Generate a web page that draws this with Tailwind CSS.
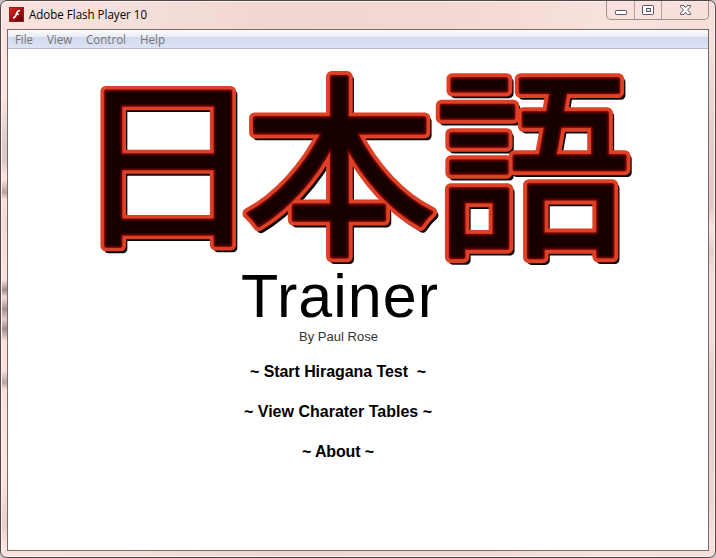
<!DOCTYPE html>
<html lang="en">
<head>
<meta charset="utf-8">
<title>Adobe Flash Player 10</title>
<script src="https://cdn.jsdelivr.net/npm/@tailwindcss/browser@4"></script>
</head>
<body class="h-[558px] w-[716px] overflow-hidden bg-[#c9c4c4]">
<div class="relative flex h-[558px] w-[716px] flex-col rounded-[7px] border border-[#514748] bg-[#fbe2de] bg-[linear-gradient(90deg,#fbe3df_0%,#f5dfda_18%,#f0d6d1_38%,#f3d8d3_65%,#f8e2dd_85%,#f6dfda_100%)] px-[6px] pb-[6px] shadow-[inset_0_0_0_1px_#fff1ee]">
  <div class="absolute left-px top-[57px] h-[488px] w-[5px] bg-[linear-gradient(180deg,#ffe4e0_0%,#ffe4e0_8%,#dcc8c6_18%,#ddc8c5_21%,#fde0dc_24%,#fde0dc_25%,#b99f9d_27.5%,#fde0dc_29%,#f3d8d4_33%,#fde0dc_44%,#fde0dc_45.5%,#a28c8c_47.5%,#f5d8d4_49%,#a69191_51.5%,#e8ccc8_53.5%,#a28c8c_55.5%,#fde0dc_58%,#fde0dc_64%,#b7a3a2_66.5%,#fde0dc_68%,#ffe4e0_85%,#e8cfcb_96%,#ffe4e0_100%)]"></div>
  <div class="absolute right-px top-[57px] h-[488px] w-[5px] bg-[linear-gradient(180deg,#f2dcd7_0%,#e8cfca_15%,#e5c8c3_30%,#fbe2dc_35%,#e8cec9_40%,#f6ddd7_44%,#f6ddd7_58%,#e8cfca_64%,#ecd3ce_90%,#fbe2de_100%)]"></div>
  <header class="flex h-[28px] shrink-0 items-start justify-between">
    <div class="flex items-center pl-[2px] pt-[5px]">
      <svg class="h-[15px] w-[15px]" viewBox="0 0 15 15">
        <defs><linearGradient id="flash" x1="0" y1="0" x2="1" y2="1"><stop offset="0" stop-color="#e52b20"/><stop offset=".5" stop-color="#a50d0b"/><stop offset="1" stop-color="#5c0304"/></linearGradient></defs>
        <rect x=".5" y=".5" width="14" height="14" fill="url(#flash)" stroke="#8a2320" stroke-width="1"/>
        <path d="M11 3.5C8.5 3.5 8 5.200 7.300 7.200C6.700 9 6 10.800 4 11" fill="none" stroke="#fff" stroke-width="1.700"/>
        <path d="M7.200 7.300h2.600" stroke="#fff" stroke-width="1.500"/>
      </svg>
      <h1 class="ml-[5px] whitespace-pre font-['Open_Sans','Noto_Sans',sans-serif] text-[12px] leading-[17px] text-black"><svg class="block h-[17px] w-[122px] overflow-visible"><text x="0" y="13" textLength="118" lengthAdjust="spacingAndGlyphs">Adobe Flash Player 10</text></svg></h1>
    </div>
    <div class="flex h-[19px] w-[103px] rounded-b-[5px] border border-t-0 border-[#a08f8e] bg-[#f8e1dc]/60">
      <div class="w-[28px] border-r border-[#b5a19f]"><svg class="h-[18px] w-[27px]" viewBox="0 0 27 18"><rect x="8.500" y="9.500" width="11" height="4" rx=".7" fill="#fff" stroke="#5b5766"/></svg></div>
      <div class="w-[27px] border-r border-[#b5a19f]"><svg class="h-[18px] w-[26px]" viewBox="0 0 26 18"><rect x="7.500" y="4.500" width="11" height="9" rx=".7" fill="#fff" stroke="#5b5766"/><rect x="11.500" y="7.500" width="4" height="3" fill="#f8e1dc" stroke="#5b5766"/></svg></div>
      <div class="flex-1"><svg class="h-[18px] w-[46px]" viewBox="0 0 46 18"><path d="M18.500 4.500h3.300l1.700 2.100 1.700-2.100h3.300v1.300L25.600 9l2.900 3.200v1.300h-3.300l-1.700-2.100-1.700 2.100h-3.300v-1.300L21.400 9l-2.900-3.200z" fill="#fff" stroke="#5b5766"/></svg></div>
    </div>
  </header>
  <main class="flex min-h-0 flex-1 flex-col border border-[#766b6b] bg-white">
    <nav class="h-[19px] shrink-0 border-b border-[#b3bbd2] bg-[linear-gradient(180deg,#fdfdff_0%,#e9edf6_36%,#d3daed_40%,#dce3f4_100%)] font-['Open_Sans','Noto_Sans',sans-serif] text-[12px]">
      <svg class="block h-[18px] w-[200px]" fill="#737373">
        <text x="7" y="14" textLength="18" lengthAdjust="spacingAndGlyphs">File</text>
        <text x="39" y="14" textLength="25" lengthAdjust="spacingAndGlyphs">View</text>
        <text x="78" y="14" textLength="40" lengthAdjust="spacingAndGlyphs">Control</text>
        <text x="132" y="14" textLength="25" lengthAdjust="spacingAndGlyphs">Help</text>
      </svg>
    </nav>
    <svg class="block h-[501px] w-[700px] shrink-0" viewBox="8 49 700 501">
      <defs>
        <g id="kanji" font-family="'Noto Sans CJK JP', sans-serif" font-weight="400" font-size="200" stroke-linejoin="round">
          <text transform="translate(72.400 233) scale(.95 .915)">日</text>
          <text transform="translate(242 240.500) scale(.975 .975)">本</text>
          <text transform="translate(434 241) scale(.99 1.005)">語</text>
        </g>
        <filter id="glow" filterUnits="userSpaceOnUse" x="80" y="55" width="570" height="225"><feGaussianBlur stdDeviation=".6"/></filter>
        <filter id="core" filterUnits="userSpaceOnUse" x="80" y="55" width="570" height="225"><feGaussianBlur stdDeviation="1.200"/></filter>
      </defs>
      <use href="#kanji" x="2.500" y="3" fill="#0a0000" stroke="#0a0000" stroke-width="9"/>
      <use href="#kanji" fill="#df4127" stroke="#df4127" stroke-width="11.500"/>
      <g filter="url(#glow)"><use href="#kanji" fill="#900000" stroke="#900000" stroke-width="3.500"/></g>
      <g filter="url(#core)"><use href="#kanji" fill="#180000" stroke="#180000" stroke-width="1"/></g>
      <text x="241" y="317" textLength="197" font-family="'Liberation Sans', Arial, sans-serif" font-size="61">Trainer</text>
      <g font-family="'Liberation Sans', Arial, sans-serif">
        <text x="299" y="341" textLength="79" font-size="13" fill="#333">By Paul Rose</text>
        <g font-size="16" font-weight="700">
          <text class="whitespace-pre" x="250" y="377" textLength="176">~ Start Hiragana Test  ~</text>
          <text x="244" y="417" textLength="188">~ View Charater Tables ~</text>
          <text x="302" y="457" textLength="72">~ About ~</text>
        </g>
      </g>
    </svg>
  </main>
</div>
</body>
</html>
